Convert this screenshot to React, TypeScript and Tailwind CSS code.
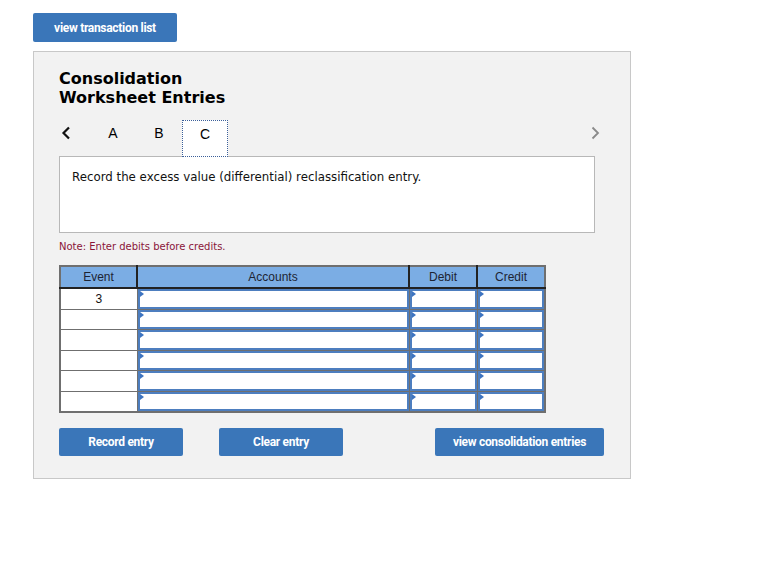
import React from "react";

const Btn = ({ children, className = "" }: { children: React.ReactNode; className?: string }) => (
  <button
    className={`h-[28px] rounded-[2px] bg-[#3a76b9] text-white text-[12px] font-bold tracking-[-0.3px] ${className}`}
    style={{ fontFamily: "Roboto, 'Liberation Sans', sans-serif" }}
  >
    {children}
  </button>
);

const InputCell = () => (
  <td className="p-0 border border-[#6f6f6f]">
    <div className="relative h-[19.5px] border-2 border-[#4d7ebf] bg-white">
      <span className="absolute left-0 top-0 w-0 h-0 border-t-[3px] border-b-[3px] border-l-[4px] border-t-transparent border-b-transparent border-l-[#3d74c0]" />
    </div>
  </td>
);

export default function App() {
  const rows = [0, 1, 2, 3, 4, 5];
  return (
    <div className="w-[758px] h-[579px] bg-white pl-[33px] pt-[13px]" style={{ fontFamily: "'DejaVu Sans', Verdana, sans-serif" }}>
      <Btn className="w-[144px] h-[29px]">view transaction list</Btn>
      <div className="mt-[9px] w-[598px] h-[428px] border border-[#c8c8c8] bg-[#f2f2f2] pl-[25px] pt-[17px]">
        <h1 className="text-[16px] font-bold leading-[19px] text-black">
          Consolidation
          <br />
          Worksheet Entries
        </h1>
        <div className="mt-[13px] flex items-start w-[536px] h-[36px]" style={{ fontFamily: "'Liberation Sans', Arial, sans-serif" }}>
          <div className="w-[31px] h-[36px] flex items-start pt-[6px] pl-[2px]">
            <svg width="10" height="14" viewBox="0 0 10 14">
              <path d="M8 1.5 L2.5 7 L8 12.5" fill="none" stroke="#111" strokeWidth="2.2" />
            </svg>
          </div>
          <div className="w-[46px] h-[36px] flex justify-center pt-[5px] text-[14px] leading-[16px] text-black">A</div>
          <div className="w-[46px] h-[36px] flex justify-center pt-[5px] text-[14px] leading-[16px] text-black">B</div>
          <div className="w-[46px] h-[37px] mb-[-1px] flex justify-center pt-[5px] text-[14px] leading-[16px] text-black bg-white border border-dotted border-[#3b5f99] relative z-10">C</div>
          <div className="flex-1" />
          <div className="w-[12px] h-[36px] flex items-start mr-[-7px] pt-[6px]">
            <svg width="10" height="14" viewBox="0 0 10 14">
              <path d="M2.5 1.5 L8 7 L2.5 12.5" fill="none" stroke="#8a8a8a" strokeWidth="1.8" />
            </svg>
          </div>
        </div>
        <div className="w-[536px] h-[77px] border border-[#b8b8b8] bg-white pl-[12px] pt-[12px] text-[11.8px] text-[#111]">
          Record the excess value (differential) reclassification entry.
        </div>
        <div className="mt-[6px] text-[10px] text-[#8a1538]">Note: Enter debits before credits.</div>
        <table
          className="mt-[11px] border-collapse border-2 border-[#6f6f6f] bg-white"
          style={{ fontFamily: "'Liberation Sans', Arial, sans-serif" }}
        >
          <thead>
            <tr className="bg-[#7badE4] h-[22px] text-[12px] text-[#1d2433]">
              <th className="w-[77px] p-0 font-normal border-b-2 border-r-2 border-[#222]">Event</th>
              <th className="w-[272px] p-0 font-normal border-b-2 border-r-2 border-[#222]">Accounts</th>
              <th className="w-[68px] p-0 font-normal border-b-2 border-r-2 border-[#222]">Debit</th>
              <th className="w-[68px] p-0 font-normal border-b-2 border-[#222]">Credit</th>
            </tr>
          </thead>
          <tbody>
            {rows.map((r) => (
              <tr key={r}>
                <td className="p-0 border border-[#6f6f6f] text-center text-[12px] text-[#111]">
                  {r === 0 ? "3" : ""}
                </td>
                <InputCell />
                <InputCell />
                <InputCell />
              </tr>
            ))}
          </tbody>
        </table>
        <div className="mt-[15px] flex">
          <Btn className="w-[124px]">Record entry</Btn>
          <Btn className="w-[124px] ml-[36px]">Clear entry</Btn>
          <Btn className="w-[169px] ml-[92px]">view consolidation entries</Btn>
        </div>
      </div>
    </div>
  );
}
